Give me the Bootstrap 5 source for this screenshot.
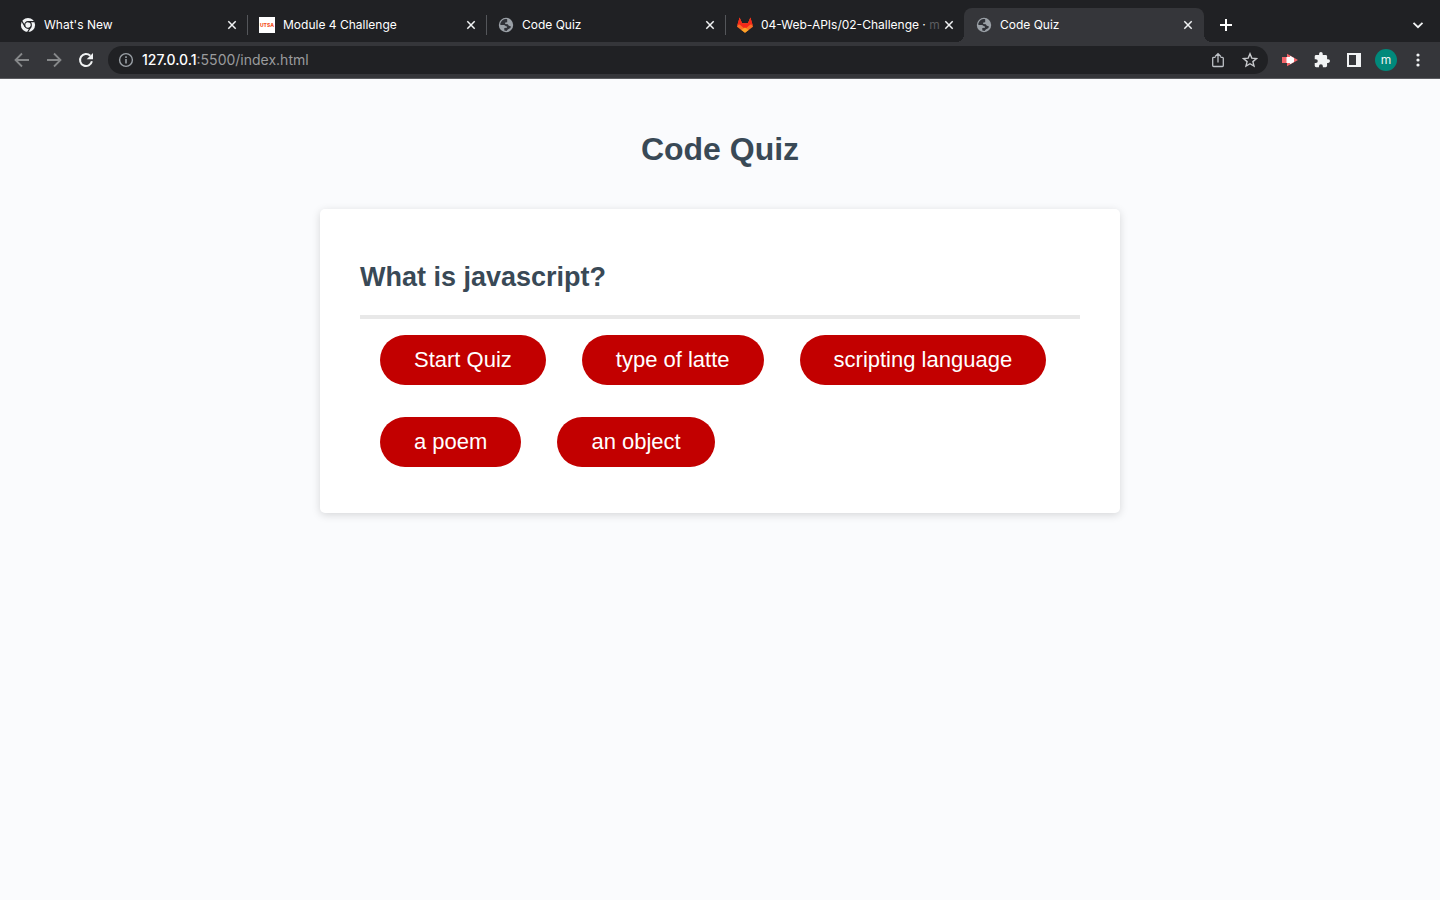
<!DOCTYPE html>
<html lang="en">
<head>
<meta charset="utf-8">
<meta name="viewport" content="width=device-width, initial-scale=1">
<title>Code Quiz</title>
<link href="https://cdn.jsdelivr.net/npm/bootstrap@5.3.0/dist/css/bootstrap.min.css" rel="stylesheet">
<style>
  body { background: #fafbfd; color: #394956; font-family: "Liberation Sans", Arial, sans-serif; }
  .browser { font-family: Inter, Roboto, sans-serif; color: #f1f3f4; }
  .browser button { background: none; border: 0; padding: 0; color: inherit; line-height: 1; }
  .browser svg { display: block; flex: none; }

  /* Tab strip */
  .tab-strip { background: #202124; padding: 8px 14px 0 8px; height: 42px; }
  .tab-item { position: relative; flex: 0 1 239px; min-width: 0; height: 34px; padding: 0 7px 0 12px; }
  .tab-item + .tab-item:not(.current)::before { content: ""; position: absolute; left: 0; top: 7px; width: 1px; height: 20px; background: #54565a; }
  .tab-item.current { flex-basis: 240px; padding-right: 8px; background: #35363a; border-radius: 8px 8px 0 0; }
  .tab-item.current::before, .tab-item.current::after { content: ""; position: absolute; bottom: 0; width: 8px; height: 8px; }
  .tab-item.current::before { left: -8px; background: radial-gradient(circle at 0 0, transparent 8px, #35363a 8px); }
  .tab-item.current::after { right: -8px; background: radial-gradient(circle at 100% 0, transparent 8px, #35363a 8px); }
  .tab-item a { color: #fff; font-size: 12px; font-weight: 400; line-height: 16px; white-space: nowrap; overflow: hidden; text-decoration: none; flex: 1 1 0; min-width: 0; margin-left: 8px; }
  .tab-item a span { color: #5c5d60; }
  .new-tab { margin-left: 14px; }

  /* Toolbar */
  .tool-bar { background: #35363a; border-bottom: 1px solid #5b5c60; height: 37px; padding: 0 6px 0 14px; }
  .nav-keys { gap: 16px; margin-right: 14px; }
  .address { background: #202124; height: 28px; padding: 0 10px; border-radius: 14px; }
  .url { font-size: 14px; line-height: 20px; color: #9a9b9d; text-decoration: none; }
  .url b { color: #fff; font-weight: 500; }
  .extensions { display: grid; grid-template-columns: repeat(5, 32px); place-items: center; margin-left: 6px; }
  .avatar { width: 22px; height: 22px; background: #00897b !important; font-size: 12px; }

  /* Quiz */
  .quiz { max-width: 848px; padding: 48px 24px; }
  h1 { font-size: 32px; line-height: 44px; font-weight: 700; margin-bottom: 38px; }
  .quiz-card { background: #fff; border-radius: 5px; padding: 48px 40px 46px; box-shadow: 0 2px 8px rgba(0, 0, 0, .15); }
  h2 { font-size: 27px; line-height: 40px; font-weight: 700; padding-bottom: 18px; border-bottom: 4px solid #e8e8e8; margin-bottom: 16px; }
  .answers { padding: 0 20px; gap: 32px 36px; }
  .answers .btn { --bs-btn-bg: #c20000; --bs-btn-color: #fff; --bs-btn-hover-bg: #a00000; --bs-btn-hover-color: #fff; --bs-btn-border-width: 0; height: 50px; padding: 0 34px; font-size: 22px; line-height: 50px; border-radius: 25px; }
</style>
</head>
<body>
<svg width="0" height="0" class="position-absolute" aria-hidden="true">
  <symbol id="cross" viewBox="0 0 16 16"><path d="M4.300 4.300l7.400 7.400M11.700 4.300l-7.400 7.400" stroke="#f1f3f4" stroke-width="1.500"/></symbol>
  <symbol id="globe" viewBox="0 0 16 16"><circle cx="8" cy="8" r="7.200" fill="#9aa0a6"/><path d="M9.200 2.200C6.200 1.400 3.300 3.200 2.300 6.600l.1 1.300 3.400.1c1.600.1 1.500 1.500 3.300 1.400l-.2 1.300-2.600.4v2.300l2.300.7 1.200-1.700 2.700-1.500.3-1.700-2-.4-1-1.600-2.700-.3.200-1.300 1.900-.3z" fill="#303238"/></symbol>
</svg>

<header class="browser">
  <nav class="tab-strip d-flex align-items-start" aria-label="Tabs">
    <div class="tab-item d-flex align-items-center">
      <svg width="16" height="16" viewBox="0 0 16 16"><circle cx="8" cy="8" r="7.100" fill="#f1f3f4"/><g stroke="#202124" stroke-width="1.200" fill="none"><circle cx="8" cy="8" r="3.300"/><path d="M8 4.700h6.600M5.100 9.600L1.800 4M10.900 9.600l-3.300 5.700"/></g></svg>
      <a href="#">What's New</a>
      <button type="button" aria-label="Close tab"><svg width="16" height="16"><use href="#cross"/></svg></button>
    </div>
    <div class="tab-item d-flex align-items-center">
      <svg width="16" height="16" viewBox="0 0 16 16"><path fill="#fff" d="M0 0h16v16H0z"/><text x="8" y="10" text-anchor="middle" font-family="Inter, sans-serif" font-weight="800" font-size="5" fill="#f4511e">UTSA</text></svg>
      <a href="#">Module 4 Challenge</a>
      <button type="button" aria-label="Close tab"><svg width="16" height="16"><use href="#cross"/></svg></button>
    </div>
    <div class="tab-item d-flex align-items-center">
      <svg width="16" height="16"><use href="#globe"/></svg>
      <a href="#">Code Quiz</a>
      <button type="button" aria-label="Close tab"><svg width="16" height="16"><use href="#cross"/></svg></button>
    </div>
    <div class="tab-item d-flex align-items-center">
      <svg width="16" height="16" viewBox="0 0 16 16"><path d="M8 15.800L0 9.800 2.600.6l2.500 5.600h5.800L13.400.6 16 9.800z" fill="#fc6d26"/><path d="M2.600.6L.3 8l2.300-.6L8 12l5.400-4.600 2.300.6L13.400.6l-2.500 5.600H5.100z" fill="#f5281a"/><path d="M8 15.800l-3.600-2.700L8 10.600l3.600 2.500z" fill="#fca326"/></svg>
      <a href="#">04-Web-APIs/02-Challenge · <span>m</span></a>
      <button type="button" aria-label="Close tab"><svg width="16" height="16"><use href="#cross"/></svg></button>
    </div>
    <div class="tab-item current d-flex align-items-center">
      <svg width="16" height="16"><use href="#globe"/></svg>
      <a href="#" aria-current="page">Code Quiz</a>
      <button type="button" aria-label="Close tab"><svg width="16" height="16"><use href="#cross"/></svg></button>
    </div>
    <button type="button" class="new-tab align-self-center" aria-label="New tab"><svg width="16" height="16" viewBox="0 0 16 16"><path d="M8 2v12M2 8h12" stroke="#fff" stroke-width="2"/></svg></button>
    <button type="button" class="ms-auto align-self-center" aria-label="Search tabs"><svg width="16" height="16" viewBox="0 0 16 16"><path d="M3.500 5.800L8 10.200l4.500-4.400" stroke="#f1f3f4" stroke-width="1.800" fill="none"/></svg></button>
  </nav>

  <div class="tool-bar d-flex align-items-center">
    <div class="nav-keys d-flex">
      <button type="button" aria-label="Back"><svg width="16" height="16" viewBox="0 0 16 16"><path d="M15 8H2M8 1.500L1.500 8 8 14.500" stroke="#86888a" stroke-width="1.800" fill="none"/></svg></button>
      <button type="button" aria-label="Forward"><svg width="16" height="16" viewBox="0 0 16 16"><path d="M1 8h13M8 1.500L14.500 8 8 14.500" stroke="#86888a" stroke-width="1.800" fill="none"/></svg></button>
      <button type="button" aria-label="Reload"><svg width="16" height="16" viewBox="0 0 16 16"><path d="M13.900 9.300A6 6 0 1 1 12.300 3.800" stroke="#f1f3f4" stroke-width="2" fill="none"/><path d="M15 1v6.300H8.700z" fill="#f1f3f4"/></svg></button>
    </div>
    <div class="address d-flex align-items-center flex-grow-1">
      <svg width="16" height="16" viewBox="0 0 16 16" class="me-2"><circle cx="8" cy="8" r="6.400" stroke="#9aa0a6" stroke-width="1.400" fill="none"/><path d="M8 7v4.500M8 4.300v1.600" stroke="#9aa0a6" stroke-width="1.600"/></svg>
      <a href="#" class="url flex-grow-1"><b>127.0.0.1</b>:5500/index.html</a>
      <button type="button" class="me-3" aria-label="Share"><svg width="16" height="16" viewBox="0 0 16 16"><path d="M5.500 5.300H3.600a.9.900 0 0 0-.9.900v7.400c0 .5.400.9.900.9h8.800c.5 0 .9-.4.900-.9V6.200a.9.900 0 0 0-.9-.9h-1.900M8 10.500V2M5.100 4.500L8 1.700l2.900 2.800" stroke="#bdc1c6" stroke-width="1.300" fill="none"/></svg></button>
      <button type="button" aria-label="Bookmark"><svg width="16" height="16" viewBox="0 0 16 16"><path d="M8 1.800l1.800 4.300 4.700.4-3.600 3.100 1.100 4.500-4-2.400-4 2.400 1.100-4.500-3.600-3.100 4.700-.4z" stroke="#c8cacd" stroke-width="1.400" fill="none"/></svg></button>
    </div>
    <div class="extensions">
      <button type="button" aria-label="Recorder"><svg width="16" height="16" viewBox="0 0 16 16"><path d="M0 5h5V1.700L16 8 5 14.300V11H0z" fill="#f4666b"/><path d="M4.500 5H8V3.800l4 2.200v4l-4 2.200V11H4.500z" fill="#fff"/></svg></button>
      <button type="button" aria-label="Extensions"><svg width="16" height="16" viewBox="1 1 22 22"><path d="M20.500 11H19V7a2 2 0 0 0-2-2h-4V3.500a2.500 2.500 0 0 0-5 0V5H4a2 2 0 0 0-2 2v3.800h1.500a2.700 2.700 0 0 1 0 5.400H2V20a2 2 0 0 0 2 2h3.800v-1.500a2.700 2.700 0 0 1 5.400 0V22H17a2 2 0 0 0 2-2v-4h1.500a2.500 2.500 0 0 0 0-5z" fill="#f1f3f4"/></svg></button>
      <button type="button" aria-label="Side panel"><svg width="16" height="16" viewBox="0 0 16 16"><path fill-rule="evenodd" d="M1 1h14v14H1zM3 3v10h7V3z" fill="#f1f3f4"/></svg></button>
      <button type="button" class="avatar rounded-circle" aria-label="Profile">m</button>
      <button type="button" aria-label="Menu"><svg width="16" height="16" viewBox="0 0 16 16" fill="#f1f3f4"><circle cx="8" cy="3" r="1.600"/><circle cx="8" cy="8" r="1.600"/><circle cx="8" cy="13" r="1.600"/></svg></button>
    </div>
  </div>
</header>

<main class="quiz container-fluid mx-auto">
  <h1 class="text-center">Code Quiz</h1>
  <section class="quiz-card">
    <h2>What is javascript?</h2>
    <div class="answers d-flex flex-wrap">
      <button type="button" class="btn">Start Quiz</button>
      <button type="button" class="btn">type of latte</button>
      <button type="button" class="btn">scripting language</button>
      <button type="button" class="btn">a poem</button>
      <button type="button" class="btn">an object</button>
    </div>
  </section>
</main>
<script src="https://cdn.jsdelivr.net/npm/bootstrap@5.3.0/dist/js/bootstrap.bundle.min.js"></script>
</body>
</html>
